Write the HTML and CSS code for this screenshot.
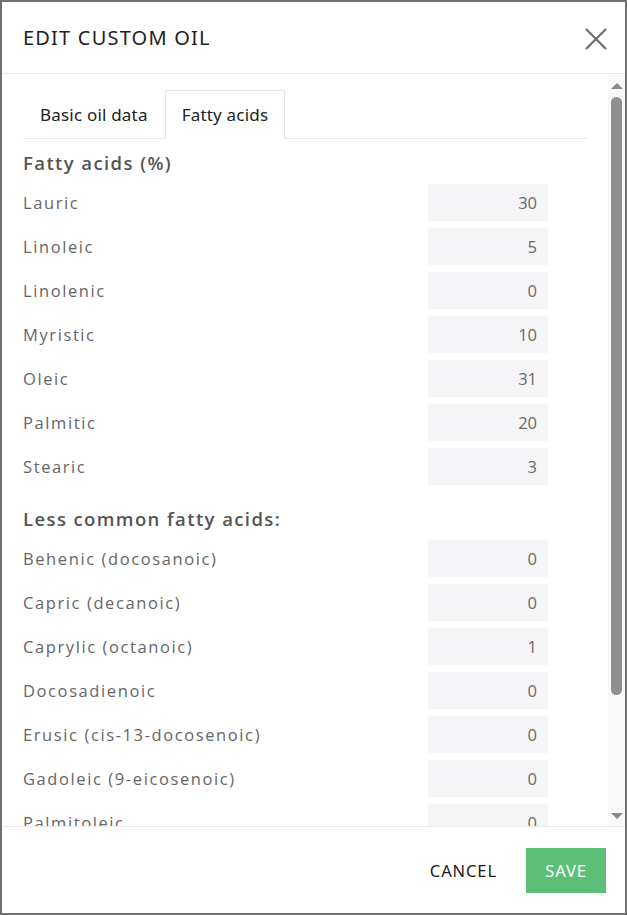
FILE: index.html
```html
<!DOCTYPE html>
<html>
<head>
<meta charset="utf-8">
<link rel="stylesheet" href="styles.css">
</head>
<body>
<div class="dialog">
  <div class="header">
    <h1 class="title">EDIT CUSTOM OIL</h1>
    <button class="close" aria-label="Close">
      <svg width="24" height="24" viewBox="0 0 24 24"><path d="M2 2 L22 22 M22 2 L2 22" stroke="#6f6f6f" stroke-width="2.2" fill="none"/></svg>
    </button>
  </div>
  <div class="body">
    <div class="content">
      <div class="tabs">
        <div class="tab">Basic oil data</div>
        <div class="tab active">Fatty acids</div>
      </div>
      <h2 class="section">Fatty acids (%)</h2>
      <div class="row"><span class="label">Lauric</span><span class="input">30</span></div>
      <div class="row"><span class="label">Linoleic</span><span class="input">5</span></div>
      <div class="row"><span class="label">Linolenic</span><span class="input">0</span></div>
      <div class="row"><span class="label">Myristic</span><span class="input">10</span></div>
      <div class="row"><span class="label">Oleic</span><span class="input">31</span></div>
      <div class="row"><span class="label">Palmitic</span><span class="input">20</span></div>
      <div class="row"><span class="label">Stearic</span><span class="input">3</span></div>
      <h2 class="section second">Less common fatty acids:</h2>
      <div class="row"><span class="label">Behenic (docosanoic)</span><span class="input">0</span></div>
      <div class="row"><span class="label">Capric (decanoic)</span><span class="input">0</span></div>
      <div class="row"><span class="label">Caprylic (octanoic)</span><span class="input">1</span></div>
      <div class="row"><span class="label">Docosadienoic</span><span class="input">0</span></div>
      <div class="row"><span class="label">Erusic (cis-13-docosenoic)</span><span class="input">0</span></div>
      <div class="row"><span class="label">Gadoleic (9-eicosenoic)</span><span class="input">0</span></div>
      <div class="row"><span class="label">Palmitoleic</span><span class="input">0</span></div>
    </div>
    <div class="scrollbar">
      <div class="arrow up"></div>
      <div class="track"><div class="thumb"></div></div>
      <div class="arrow down"></div>
    </div>
  </div>
  <div class="footer">
    <button class="btn cancel">CANCEL</button>
    <button class="btn save">SAVE</button>
  </div>
</div>
</body>
</html>
```

FILE: styles.css
```css
* { box-sizing: border-box; }
html, body { margin: 0; padding: 0; background: #fff; }
.dialog {
  width: 627px;
  height: 915px;
  border: 2px solid #707070;
  display: flex;
  flex-direction: column;
  background: #fff;
  font-family: "Noto Sans", sans-serif;
}
.header {
  height: 72px;
  flex: none;
  display: flex;
  align-items: center;
  justify-content: space-between;
  padding: 0 17px 0 21px;
  border-bottom: 1px solid #e9e9e9;
}
.title {
  margin: 0;
  font-family: "Noto Sans", sans-serif;
  font-weight: 400;
  font-size: 20px;
  letter-spacing: 1.2px;
  color: #222;
}
.close {
  border: 0;
  background: none;
  padding: 0;
  width: 24px;
  height: 24px;
  margin-top: 2px;
}
.body {
  flex: 1;
  display: flex;
  overflow: hidden;
  min-height: 0;
}
.content {
  flex: 1;
  overflow: hidden;
  padding: 16px 20px 0 21px;
}
.tabs {
  display: flex;
  border-bottom: 1px solid #e9e9e9;
  height: 49px;
}
.tab {
  padding: 0 16px;
  height: 49px;
  line-height: 47px;
  font-size: 17px;
  letter-spacing: 0.2px;
  color: #222;
  border: 1px solid transparent;
  border-bottom: 0;
}
.tab.active {
  border-color: #e6e6e6;
  background: #fff;
  margin-bottom: -1px;
  height: 49px;
}
.section {
  margin: 12px 0 9px;
  height: 24px;
  line-height: 24px;
  font-family: "Open Sans", sans-serif;
  font-size: 18.5px;
  font-weight: 600;
  letter-spacing: 1.4px;
  color: #555;
}
.section.second { margin-top: 22px; margin-bottom: 9px; }
.row {
  display: flex;
  align-items: center;
  height: 37px;
  margin-bottom: 7px;
  padding-right: 40px;
}
.label {
  flex: 1;
  font-family: "Open Sans", sans-serif;
  font-size: 16.5px;
  letter-spacing: 1.6px;
  color: #666;
}
.input {
  width: 120px;
  height: 37px;
  line-height: 37px;
  background: #f5f5f7;
  text-align: right;
  padding-right: 11px;
  font-family: "Open Sans", sans-serif;
  font-size: 16.5px;
  color: #6a6a6a;
}
.scrollbar {
  width: 17px;
  flex: none;
  background: #f8f8f8;
  display: flex;
  flex-direction: column;
  align-items: center;
}
.arrow { width: 0; height: 0; border-left: 6px solid transparent; border-right: 6px solid transparent; }
.arrow.up { border-bottom: 6px solid #8a8a8a; margin-top: 9px; }
.arrow.down { border-top: 6px solid #8a8a8a; margin-bottom: 7px; }
.track { flex: 1; width: 100%; display: flex; justify-content: center; padding-top: 8px; }
.thumb { width: 11px; height: 598px; background: #8f8f8f; border-radius: 6px; }
.footer {
  height: 87px;
  flex: none;
  border-top: 1px solid #e9e9e9;
  display: flex;
  align-items: center;
  justify-content: flex-end;
  padding: 0 19px 0 0;
  gap: 13px;
}
.btn {
  border: 0;
  font-family: "Noto Sans", sans-serif;
  font-size: 16.5px;
  letter-spacing: 0.9px;
  height: 45px;
  cursor: pointer;
}
.cancel { background: none; color: #1a1a1a; padding: 0 16px; }
.save { background: #5dbf77; color: #fff; width: 80px; padding: 0; }
```
